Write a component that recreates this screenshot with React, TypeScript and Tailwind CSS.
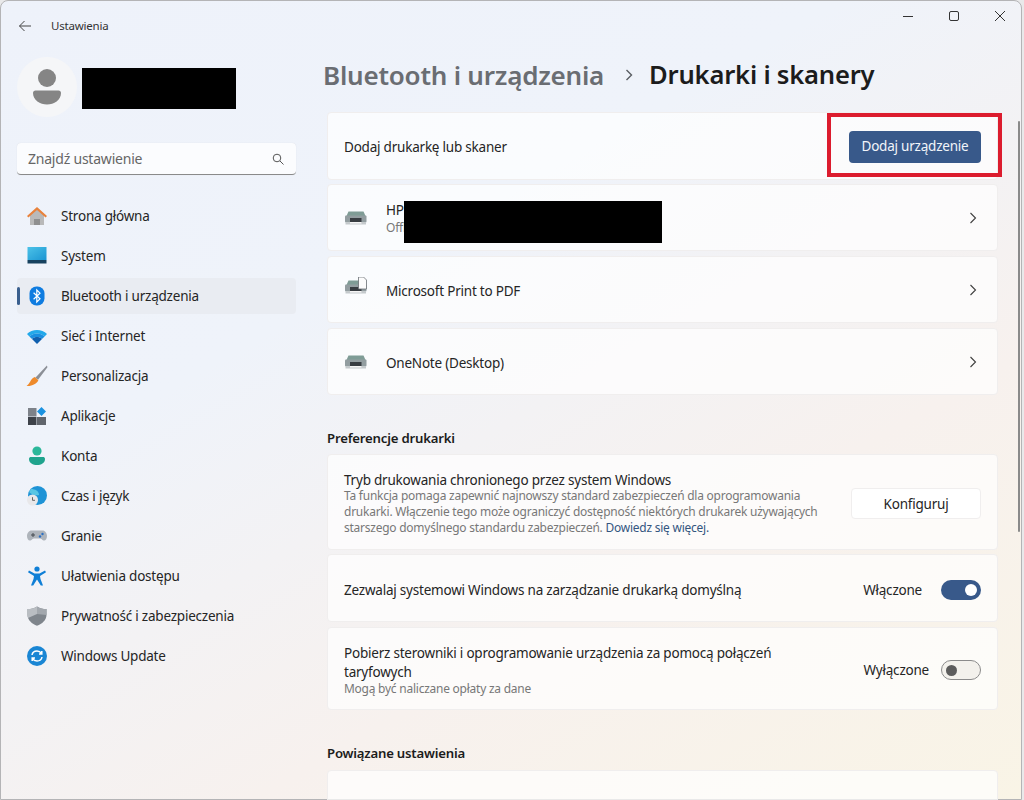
import { ReactNode } from "react";

function HomeIcon() {
  return (
    <svg viewBox="0 0 22 22" className="h-[22px] w-[22px]">
      <path d="M4 10 L11 4 L18 10 V20 H14 V14 H8 V20 H4 Z" fill="#b9b9b9" />
      <path d="M8 20 V14 H14 V20 Z" fill="#8f8f8f" />
      <path d="M1 11 L11 2 L21 11 L19.6 12.6 L11 5 L2.4 12.6 Z" fill="#e8823c" />
    </svg>
  );
}

function SystemIcon() {
  return (
    <svg viewBox="0 0 20 20" className="h-5 w-5">
      <defs>
        <linearGradient id="sys" x1="0" y1="0" x2="1" y2="1">
          <stop offset="0" stopColor="#4cc2e8" />
          <stop offset="1" stopColor="#1b95d2" />
        </linearGradient>
      </defs>
      <rect x="0.5" y="1" width="19" height="13" fill="url(#sys)" />
      <rect x="0.5" y="14" width="19" height="3.5" fill="#17425f" />
    </svg>
  );
}

function BluetoothIcon() {
  return (
    <svg viewBox="0 0 20 20" className="h-5 w-5">
      <rect x="2.5" y="0.5" width="15" height="19" rx="7" fill="#0f7ce0" />
      <path d="M6.6 6.8 L13 12.8 L9.8 16 V4 L13 7.2 L6.6 13.2" fill="none" stroke="#fff" strokeWidth="1.2" />
    </svg>
  );
}

function WifiIcon() {
  return (
    <svg viewBox="0 0 22 20" className="h-5 w-[22px]">
      <path d="M1 8 C6 2.5 16 2.5 21 8 L18.6 10.4 C14.5 6.4 7.5 6.4 3.4 10.4 Z" fill="#23a9ea" />
      <path d="M3.4 10.4 C7.5 6.4 14.5 6.4 18.6 10.4 L16 13 C13 10.4 9 10.4 6 13 Z" fill="#1a8fe0" />
      <path d="M6 13 C9 10.4 13 10.4 16 13 L11 18 Z" fill="#0f5fae" />
    </svg>
  );
}

function BrushIcon() {
  return (
    <svg viewBox="0 0 20 20" className="h-[22px] w-[22px]">
      <path d="M19 0.5 L8.5 11.5 L11 13.5 L19.5 2 Z" fill="#8b8f96" />
      <path d="M8 11 L11.2 13.8 C10 17 5 19.5 0.5 19 C3.5 17.5 4 12.5 8 11 Z" fill="#ee8a2b" />
    </svg>
  );
}

function AppsIcon() {
  return (
    <svg viewBox="0 0 20 20" className="h-5 w-5">
      <rect x="1" y="2" width="8.5" height="8.5" fill="#7d8289" />
      <rect x="1" y="11" width="8.5" height="8" fill="#3d4249" />
      <rect x="10" y="11" width="9" height="8" fill="#60656c" />
      <path d="M14.5 1 L19 5.5 L14.5 10 L10 5.5 Z" fill="#1b92e0" />
    </svg>
  );
}

function AccountIcon() {
  return (
    <svg viewBox="0 0 20 20" className="h-5 w-5">
      <circle cx="10" cy="5" r="4.6" fill="#2bb79a" />
      <path d="M2 13 C2 11.5 3 11 4 11 H16 C17 11 18 11.5 18 13 C18 17 14 19 10 19 C6 19 2 17 2 13 Z" fill="#1fa38d" />
    </svg>
  );
}

function TimeIcon() {
  return (
    <svg viewBox="0 0 20 20" className="h-5 w-5">
      <circle cx="10.5" cy="9.5" r="9.5" fill="#1e93d6" />
      <path d="M4 3 C8 3 12 5 12 9 C8 10 4 8 2 6 Z" fill="#58c6e4" />
      <circle cx="5.5" cy="14" r="5.5" fill="#e8e8ea" />
      <path d="M5.5 11.2 V14.3 H8" fill="none" stroke="#555" strokeWidth="0.9" />
    </svg>
  );
}

function GameIcon() {
  return (
    <svg viewBox="0 0 20 20" className="h-5 w-5">
      <path d="M4.5 4.5 H15.5 C18 4.5 20 7 20 10 C20 13 18.5 15 16.5 14.5 C15 14 14.5 12.5 13 12.5 H7 C5.5 12.5 5 14 3.5 14.5 C1.5 15 0 13 0 10 C0 7 2 4.5 4.5 4.5 Z" fill="#aeb4bb" />
      <path d="M4 9 H8 M6 7 V11" stroke="#454a50" strokeWidth="1" />
      <circle cx="13" cy="10.5" r="1.2" fill="#2b6fc4" />
      <circle cx="15.5" cy="8" r="1.2" fill="#2b6fc4" />
    </svg>
  );
}

function AccessIcon() {
  return (
    <svg viewBox="0 0 20 20" className="h-5 w-5">
      <circle cx="10" cy="3" r="2.6" fill="#0f7fd6" />
      <path d="M2 4.5 L7.5 7.5 H12.5 L18 4.5 L19 6.3 L13 10 L13.5 13 L16 19.5 H13.8 L10 13.5 L6.2 19.5 H4 L6.5 13 L7 10 L1 6.3 Z" fill="#0f7fd6" />
    </svg>
  );
}

function ShieldIcon() {
  return (
    <svg viewBox="0 0 20 20" className="h-5 w-5">
      <path d="M10 0.5 C13 2.5 16 3 19.5 3 V9 C19.5 14 15 18 10 19.8 C5 18 0.5 14 0.5 9 V3 C4 3 7 2.5 10 0.5 Z" fill="#7f858c" />
      <path d="M10 0.5 C7 2.5 4 3 0.5 3 V9 C0.5 10 0.7 11 1 12 L10 8 Z" fill="#b9bdc2" />
      <path d="M10 0.5 C13 2.5 16 3 19.5 3 V9 L10 8 Z" fill="#a2a7ad" />
    </svg>
  );
}

function UpdateIcon() {
  return (
    <svg viewBox="0 0 20 20" className="h-5 w-5">
      <circle cx="10" cy="10" r="10" fill="#1a86d4" />
      <path d="M5 9 C5.5 6 8 5 10 5 C12 5 13.5 6 14.5 7.5 M14.8 5 V8 H12" fill="none" stroke="#fff" strokeWidth="1.5" />
      <path d="M15 11 C14.5 14 12 15 10 15 C8 15 6.5 14 5.5 12.5 M5.2 15 V12 H8" fill="none" stroke="#fff" strokeWidth="1.5" />
    </svg>
  );
}

function PrinterIcon({ pdf }: { pdf?: boolean }) {
  return (
    <svg viewBox="0 0 24 20" className={pdf ? "mb-[6px] h-5 w-6" : "h-5 w-6"}>
      <path d="M4.5 3.5 H19.5 L21.5 8 H2.5 Z" fill="#7f9c96" />
      <rect x="1" y="7.5" width="21.5" height="7" rx="1" fill="#929da0" />
      <rect x="6" y="10" width="11.5" height="4.5" fill="#383d42" />
      <rect x="1.5" y="14.5" width="20.5" height="2" fill="#c4c9cc" />
      <rect x="6" y="14" width="11.5" height="1.5" fill="#f5f5f5" />
      {pdf ? <path d="M14.5 0 H19.5 L22.5 3 V12 H14.5 Z" fill="#fcfcfc" stroke="#6a6f74" strokeWidth="0.8" /> : null}
    </svg>
  );
}

function Chevron() {
  return (
    <svg viewBox="0 0 12 12" className="mr-[2px] h-3 w-3" fill="none" stroke="#3f3f3f" strokeWidth="1.1">
      <path d="M3.5 1 L8.5 6 L3.5 11" />
    </svg>
  );
}

function Card({ className, children }: { className: string; children: ReactNode }) {
  return (
    <div className={"flex items-center justify-between rounded-[4px] border border-[#f0eeee] bg-white/70 pl-4 pr-4 pt-[1px] " + className}>
      {children}
    </div>
  );
}

const navItems = [
  { label: "Strona główna", icon: <HomeIcon /> },
  { label: "System", icon: <SystemIcon /> },
  { label: "Bluetooth i urządzenia", icon: <BluetoothIcon />, active: true },
  { label: "Sieć i Internet", icon: <WifiIcon /> },
  { label: "Personalizacja", icon: <BrushIcon /> },
  { label: "Aplikacje", icon: <AppsIcon /> },
  { label: "Konta", icon: <AccountIcon /> },
  { label: "Czas i język", icon: <TimeIcon /> },
  { label: "Granie", icon: <GameIcon /> },
  { label: "Ułatwienia dostępu", icon: <AccessIcon /> },
  { label: "Prywatność i zabezpieczenia", icon: <ShieldIcon /> },
  { label: "Windows Update", icon: <UpdateIcon /> },
];

export default function App() {
  return (
    <div className="relative h-[800px] w-[1024px] overflow-hidden bg-[#e9e9ea] font-['Noto_Sans',sans-serif] text-[13.5px] tracking-[-0.016em] text-[#252525]">
      <div className="flex h-[800px] w-[1022px] rounded-t-lg border border-[#b4b4b6] bg-[linear-gradient(150deg,#eef2fa_0%,#eff3fa_35%,#f7f1ee_68%,#f9f4e6_100%)]">
        {/* Sidebar */}
        <div className="w-[326px] shrink-0 pl-4 pr-[31px]">
          <div className="flex h-[50px] items-center">
            <svg viewBox="0 0 14 14" className="ml-[1px] h-[14px] w-[14px]" fill="none" stroke="#444" strokeWidth="1">
              <path d="M13 7 H1.5 M6.5 2 L1.5 7 L6.5 12" />
            </svg>
            <span className="ml-[19px] text-[11.5px] text-[#333]">Ustawienia</span>
          </div>
          <div className="mt-[6px] flex items-center">
            <div className="flex h-[60px] w-[60px] items-center justify-center rounded-full bg-[#f5f6f8]">
              <svg viewBox="0 0 30 36" className="h-9 w-[30px]" fill="#858585">
                <circle cx="15" cy="9" r="9" />
                <path d="M1 24 C1 22.5 2 21.5 3.5 21.5 H26.5 C28 21.5 29 22.5 29 24 C29 31 22 35.5 15 35.5 C8 35.5 1 31 1 24 Z" />
              </svg>
            </div>
          </div>
          <div className="mt-[26px] flex h-[32px] items-center justify-between rounded-[4px] border-b border-[#8a8a8a] bg-[#fbfcfe] pl-[11px] pr-3 shadow-[0_0_1px_rgba(0,0,0,0.12)]">
            <span className="text-[14px] text-[#666]">Znajdź ustawienie</span>
            <svg viewBox="0 0 12 12" className="h-3 w-3" fill="none" stroke="#555" strokeWidth="1">
              <circle cx="5" cy="5" r="3.8" />
              <path d="M8 8 L11.5 11.5" />
            </svg>
          </div>
          <nav className="mt-[23px] flex flex-col gap-1">
            {navItems.map((item) => (
              <div
                key={item.label}
                className={"relative flex h-9 items-center rounded-[4px] " + (item.active ? "bg-[#e9ecf2]" : "")}
              >
                {item.active ? <span className="absolute left-0 top-[9px] h-[18px] w-[3px] rounded-full bg-[#3a5f8e]" /> : null}
                <span className="flex w-[44px] justify-center pr-[4px]">{item.icon}</span>
                <span>{item.label}</span>
              </div>
            ))}
          </nav>
        </div>

        {/* Content */}
        <div className="w-[671px] shrink-0">
          <div className="mt-[54px] flex h-10 items-center -ml-1">
            <span className="text-[26px] font-semibold text-[#6a6d72]">Bluetooth i urządzenia</span>
            <svg viewBox="0 0 12 12" className="ml-[19px] mr-[14px] h-3 w-3" fill="none" stroke="#5a5d62" strokeWidth="1.4">
              <path d="M3.5 1 L8.5 6 L3.5 11" />
            </svg>
            <span className="text-[25.6px] font-semibold text-[#1c1c1c]">Drukarki i skanery</span>
          </div>

          <div className="mt-[17px] flex flex-col">
            <Card className="h-[68px]">
              <span className="pt-[2px]">Dodaj drukarkę lub skaner</span>
              <button className="flex h-8 w-[132px] items-center justify-center rounded-[4px] bg-[#38598a] text-[#f2f5fa]">
                Dodaj urządzenie
              </button>
            </Card>
            <Card className="mt-1 h-[67px]">
              <span className="flex items-center">
                <PrinterIcon />
                <span className="ml-[18px] flex flex-col pt-[2px] leading-[18px]">
                  <span>HP</span>
                  <span className="text-[12px] text-[#777]">Offline</span>
                </span>
              </span>
              <Chevron />
            </Card>
            <Card className="mt-[5px] h-[67px]">
              <span className="flex items-center">
                <PrinterIcon pdf />
                <span className="ml-[18px] pt-[2px]">Microsoft Print to PDF</span>
              </span>
              <Chevron />
            </Card>
            <Card className="mt-[5px] h-[67px]">
              <span className="flex items-center">
                <PrinterIcon />
                <span className="ml-[18px] pt-[2px]">OneNote (Desktop)</span>
              </span>
              <Chevron />
            </Card>
          </div>

          <h2 className="mt-[33px] h-5 text-[13.2px] font-semibold leading-5 text-[#1c1c1c]">Preferencje drukarki</h2>

          <div className="mt-[6px] flex flex-col">
            <Card className="h-[96px]">
              <div className="w-[490px] pt-[2px]">
                <div className="leading-4">Tryb drukowania chronionego przez system Windows</div>
                <div className="text-[11.95px] leading-4 text-[#777]">
                  Ta funkcja pomaga zapewnić najnowszy standard zabezpieczeń dla oprogramowania drukarki. Włączenie tego może ograniczyć dostępność niektórych drukarek używających starszego domyślnego standardu zabezpieczeń.{" "}
                  <span className="text-[#33557f]">Dowiedz się więcej.</span>
                </div>
              </div>
              <button className="mt-[2px] flex h-[31px] w-[130px] items-center justify-center rounded-[4px] border border-[#f0eeee] bg-white pt-[2px]">
                Konfiguruj
              </button>
            </Card>
            <Card className="mt-[4px] h-[68px]">
              <span className="pt-[4px]">Zezwalaj systemowi Windows na zarządzanie drukarką domyślną</span>
              <span className="flex items-center pt-[2px]">
                <span className="pt-[2px]">Włączone</span>
                <span className="ml-[19px] flex h-5 w-10 items-center justify-end rounded-full bg-[#38598a] pr-1">
                  <span className="h-3 w-3 rounded-full bg-white" />
                </span>
              </span>
            </Card>
            <Card className="mt-[5px] h-[83px]">
              <div className="w-[490px] pt-[2px]">
                <div className="leading-[19px]">Pobierz sterowniki i oprogramowanie urządzenia za pomocą połączeń taryfowych</div>
                <div className="text-[11.95px] leading-[14px] text-[#777]">Mogą być naliczane opłaty za dane</div>
              </div>
              <span className="flex items-center pt-[2px]">
                <span>Wyłączone</span>
                <span className="ml-3 flex h-5 w-10 items-center rounded-full border border-[#8b8b8b] bg-[#f3f1ec] pl-1">
                  <span className="h-[11px] w-[11px] rounded-full bg-[#5c5c5c]" />
                </span>
              </span>
            </Card>
          </div>

          <h2 className="mt-[33px] h-5 text-[13.2px] font-semibold leading-5 text-[#1c1c1c]">Powiązane ustawienia</h2>
          <Card className="mt-[7px] h-[68px]">
            <span />
          </Card>
        </div>
      </div>

      {/* Scrollbar */}
      <span className="absolute left-[1018px] top-[121px] h-[411px] w-[2px] rounded-full bg-[#8a8a8a]" />

      {/* Window controls */}
      <div className="absolute right-[18px] top-[10px] flex items-center gap-[34px]">
        <svg viewBox="0 0 12 12" className="h-[12px] w-[12px]" stroke="#333" strokeWidth="1"><path d="M1 6.5 H11" /></svg>
        <svg viewBox="0 0 12 12" className="h-[12px] w-[12px]" stroke="#333" fill="none" strokeWidth="1"><rect x="1.5" y="1.5" width="9" height="9" rx="1.5" /></svg>
        <svg viewBox="0 0 12 12" className="h-[12px] w-[12px]" stroke="#333" strokeWidth="1"><path d="M1 1 L11 11 M11 1 L1 11" /></svg>
      </div>

      {/* Redactions and highlight from the screenshot */}
      <span className="absolute left-[82px] top-[68px] h-[41px] w-[154px] bg-black" />
      <span className="absolute left-[404px] top-[201px] h-[42px] w-[258px] bg-black" />
      <span className="absolute left-[827px] top-[113px] h-[64px] w-[175px] border-[4px] border-[#dc1c2e]" />
    </div>
  );
}
